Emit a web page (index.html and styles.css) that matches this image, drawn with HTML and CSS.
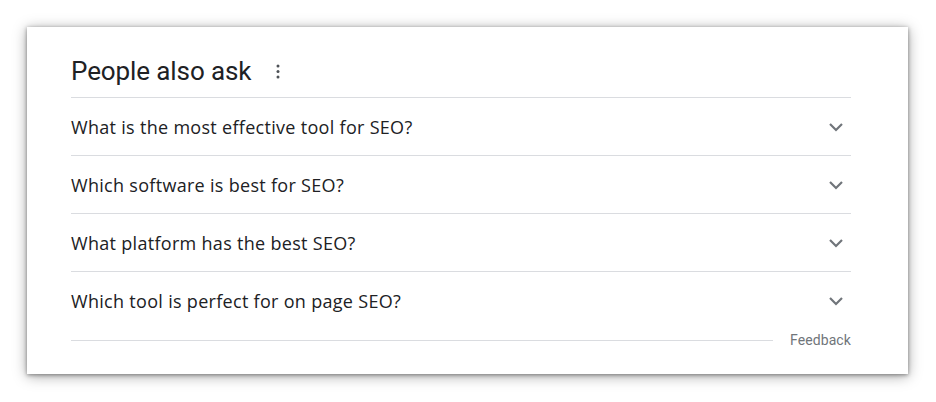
FILE: index.html
```html
<!DOCTYPE html>
<html>
<head>
<meta charset="utf-8">
<link rel="stylesheet" href="styles.css">
</head>
<body>
<div class="card">
  <div class="head">
    <h2 class="title">People also ask</h2>
    <svg class="menu" width="4" height="15" viewBox="0 0 4 15"><circle cx="2" cy="2" r="1.5"/><circle cx="2" cy="7.5" r="1.5"/><circle cx="2" cy="13" r="1.5"/></svg>
  </div>
  <div class="q"><span>What is the most effective tool for SEO?</span><svg class="chev" width="16" height="10" viewBox="0 0 16 10"><path d="M2 2l6 6 6-6"/></svg></div>
  <div class="q"><span>Which software is best for SEO?</span><svg class="chev" width="16" height="10" viewBox="0 0 16 10"><path d="M2 2l6 6 6-6"/></svg></div>
  <div class="q"><span>What platform has the best SEO?</span><svg class="chev" width="16" height="10" viewBox="0 0 16 10"><path d="M2 2l6 6 6-6"/></svg></div>
  <div class="q last"><span>Which tool is perfect for on page SEO?</span><svg class="chev" width="16" height="10" viewBox="0 0 16 10"><path d="M2 2l6 6 6-6"/></svg></div>
  <div class="foot"><div class="line"></div><span class="fb">Feedback</span></div>
</div>
</body>
</html>
```
FILE: styles.css
```css
html, body { margin: 0; background: #fff; }
body { padding: 27px 0 28px 27px; font-family: Roboto, "Open Sans", sans-serif; color: #202124; }
.card {
  width: 881px;
  height: 347px;
  box-sizing: border-box;
  background: #fff;
  box-shadow: 0 1px 4px rgba(0,0,0,0.4), 0 2px 13px rgba(0,0,0,0.35);
  padding: 0 57px 0 44px;
}
.head {
  display: flex;
  align-items: center;
  height: 71px;
  border-bottom: 1px solid #dadce0;
  box-sizing: border-box;
  padding-top: 17px;
}
.title { margin: 0; font-weight: 400; font-size: 26px; letter-spacing: -0.1px; }
.menu { fill: #4d5156; margin-left: 25px; margin-top: 2px; }
.q {
  display: flex;
  align-items: center;
  justify-content: space-between;
  height: 58px;
  box-sizing: border-box;
  border-bottom: 1px solid #dadce0;
  font-family: "Open Sans", sans-serif;
  font-size: 18px;
  letter-spacing: 0.3px;
}
.q.last { border-bottom: none; }
.chev { fill: none; stroke: #70757a; stroke-width: 2.2; margin-right: 7px; }
.foot { display: flex; align-items: center; margin-top: 1px; height: 18px; }
.line { flex: 1; height: 1px; background: #dadce0; margin-right: 17px; }
.fb { font-size: 14px; color: #70757a; letter-spacing: 0.1px; }
```
